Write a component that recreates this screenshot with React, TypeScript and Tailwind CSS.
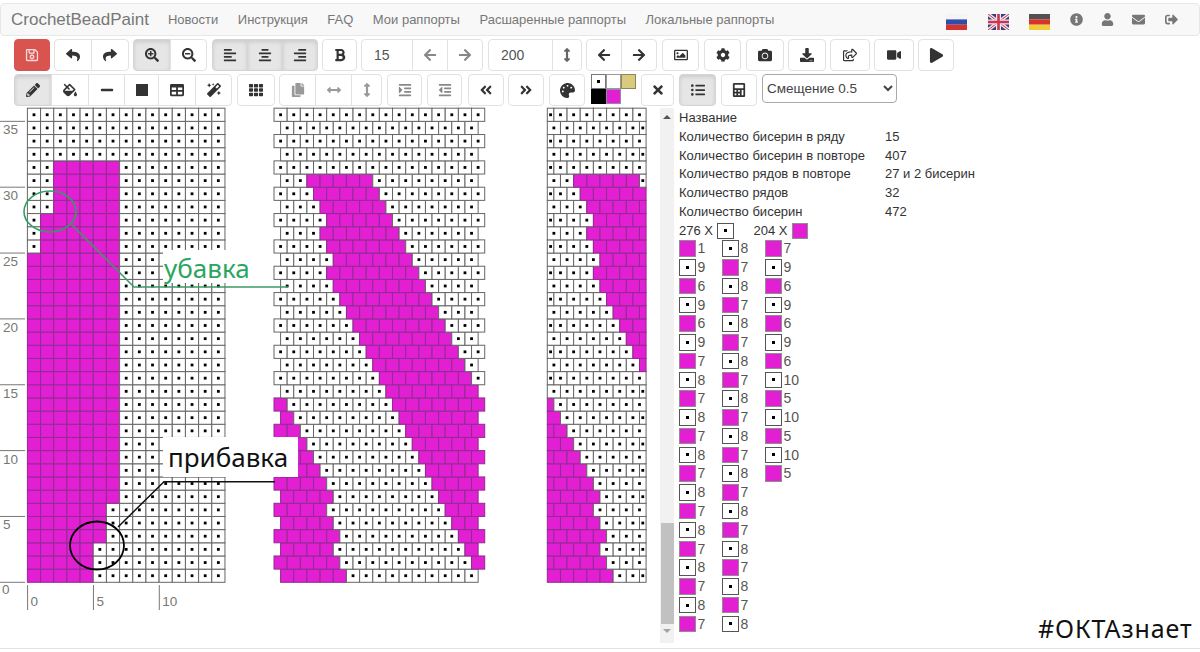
import type { ReactNode } from "react"
import { twMerge } from "tailwind-merge"
import {
  FaAlignCenter, FaAlignLeft, FaAlignRight, FaAngleDoubleLeft, FaAngleDoubleRight,
  FaArrowLeft, FaArrowRight, FaArrowsAltH, FaArrowsAltV, FaBold, FaCalculator, FaCamera,
  FaCog, FaCopy, FaDownload, FaEnvelope, FaFillDrip, FaIndent, FaInfoCircle, FaListUl, FaMagic,
  FaMinus, FaOutdent, FaPalette, FaPencilAlt, FaPlay, FaRegImage, FaRegSave,
  FaRegShareSquare, FaReply, FaSearchMinus, FaSearchPlus, FaShare, FaSignOutAlt,
  FaSquareFull, FaTable, FaTh, FaTimes, FaUser, FaVideo,
} from "react-icons/fa"

const CELL = 13.17
const BOTTOM = 582.3
const MAGENTA = "#e31fd3"

// run lengths as the side list shows them, top to bottom, magenta first
const RUNS = [
  1, 9, 6, 9, 6, 9, 7, 8, 7, 8, 7, 8, 7, 8, 7, 8, 7, 8, 7, 8, 7,
  8, 7, 8, 7, 8, 7, 8, 7, 8, 7, 8, 7, 8, 7, 8, 7, 8, 7, 8, 7, 8,
  7, 9, 6, 9, 6, 9, 6, 10, 5, 10, 5, 10, 5,
]

const buildBeads = () => {
  const beads: boolean[] = []
  for (let i = RUNS.length - 1; i >= 0; i--) {
    for (let n = 0; n < RUNS[i]; n++) beads.push(i % 2 === 0)
  }
  for (const [len, on] of [[5, 1], [10, 0], [5, 1], [10, 0], [5, 1], [10, 0], [5, 1], [10, 0], [5, 1]]) {
    for (let n = 0; n < len; n++) beads.push(on === 1)
  }
  return beads
}

// rows of the brick view: even rows hold 15 beads and start half a cell in, odd rows hold 16
const buildBrickRows = () => {
  const beads = buildBeads()
  const rows: boolean[][] = []
  let pos = 0
  for (let r = 0; r < 36; r++) {
    const len = r % 2 === 0 ? 15 : 16
    const row: boolean[] = []
    for (let c = 0; c < len; c++) row.push(beads[pos + c] ?? false)
    pos += len
    rows.push(row)
  }
  return rows
}

const draftOn = (r: number, c: number) => {
  if (r > 31) return false
  const end = r <= 2 ? 5 : r <= 5 ? 6 : 7
  const start = r <= 24 ? 0 : r <= 27 ? 1 : 2
  return c >= start && c < end
}

function Bead({ x, y, w, on }: { x: number; y: number; w: number; on: boolean }) {
  return (
    <g>
      <rect x={x} y={y} width={w} height={CELL} fill={on ? MAGENTA : "#fff"} stroke={on ? "#8f2c92" : "#666"} strokeWidth={1} />
      {!on && <rect x={x + w / 2 - 1.4} y={y + CELL / 2 - 1.4} width={2.8} height={2.8} fill="#000" />}
    </g>
  )
}

function Canvas() {
  const brick = buildBrickRows()
  const draft: ReactNode[] = []
  const middle: ReactNode[] = []
  const right: ReactNode[] = []

  for (let r = 0; r < 36; r++) {
    const y = BOTTOM - CELL * (r + 1)
    for (let c = 0; c < 15; c++) {
      draft.push(<Bead key={`${r}-${c}`} x={27.4 + c * CELL} y={y} w={CELL} on={draftOn(r, c)} />)
    }
    const even = r % 2 === 0
    brick[r].forEach((on, c) => {
      middle.push(<Bead key={`${r}-${c}`} x={274 + (even ? CELL / 2 : 0) + c * CELL} y={y} w={CELL} on={on} />)
    })
    for (let c = 0; c < 8; c++) {
      const on = brick[r][c]
      if (even) {
        right.push(<Bead key={`${r}-${c}`} x={547.3 + c * CELL} y={y} w={c === 7 ? CELL / 2 : CELL} on={on} />)
      } else if (c === 0) {
        right.push(<Bead key={`${r}-${c}`} x={547.3} y={y} w={CELL / 2} on={on} />)
      } else {
        right.push(<Bead key={`${r}-${c}`} x={547.3 + CELL / 2 + (c - 1) * CELL} y={y} w={CELL} on={on} />)
      }
    }
  }

  const ticks = [35, 30, 25, 20, 15, 10, 5]

  return (
    <div className="relative w-[660px] shrink-0">
      <svg width="660" height="542" viewBox="0 106 660 542" className="block">
        {ticks.map((t) => {
          const y = BOTTOM - t * CELL
          return (
            <g key={t}>
              <line x1="0" x2="25" y1={y} y2={y} stroke="#777" strokeWidth="1" />
              <text x="3" y={y + 13} fontSize="13.5" fill="#777" fontFamily="Liberation Sans">{t}</text>
            </g>
          )
        })}
        <line x1="0" x2="25" y1={BOTTOM} y2={BOTTOM} stroke="#777" strokeWidth="1" />
        <text x="2" y="594" fontSize="13.5" fill="#777" fontFamily="Liberation Sans">0</text>
        {[0, 5, 10].map((t) => {
          const x = 27.6 + t * CELL
          return (
            <g key={t}>
              <line x1={x} x2={x} y1="585" y2="610" stroke="#777" strokeWidth="1" />
              <text x={x + 3} y="606" fontSize="13.5" fill="#777" fontFamily="Liberation Sans">{t}</text>
            </g>
          )
        })}
        <g>{draft}</g>
        <g>{middle}</g>
        <g>{right}</g>
        <ellipse cx="50" cy="211.5" rx="26" ry="20.5" fill="none" stroke="#2f9e62" strokeWidth="1.6" />
        <path d="M72 225L134 287H288" fill="none" stroke="#3a9a66" strokeWidth="1.5" />
        <ellipse cx="97" cy="545.5" rx="27" ry="24" fill="none" stroke="#000" strokeWidth="1.8" />
        <path d="M118 527L164 481.7H275" fill="none" stroke="#111" strokeWidth="1.5" />
      </svg>
      <div className="absolute left-[163px] top-[144px] h-[33px] w-[110px] bg-white pl-[1px] text-[26px] leading-[36px] text-[#2aa660] [font-family:'Noto_Sans',sans-serif]">
        убавка
      </div>
      <div className="absolute left-[163px] top-[331px] h-[40px] w-[135px] bg-white pl-[5px] text-[26px] leading-[40px] text-[#111] [font-family:'Noto_Sans',sans-serif]">
        прибавка
      </div>
    </div>
  )
}

function Btn({ children, className = "" }: { children: ReactNode; className?: string }) {
  return (
    <button
      type="button"
      className={twMerge(
        "flex h-full items-center justify-center border border-[#e2e2e2] bg-white text-[14px] text-[#333]",
        className,
      )}
    >
      {children}
    </button>
  )
}

const ON = "bg-[#e6e6e6] border-[#d4d4d4] shadow-[inset_0_2px_4px_rgba(0,0,0,0.12)]"

function Toolbar() {
  return (
    <>
      <div className="mt-[3px] flex h-[32px] pl-[14px]">
        <Btn className="w-[36px] rounded-[4px] border-[#d9534f] bg-[#d9534f] text-[#f6dcdb]"><FaRegSave /></Btn>
        <div className="ml-[4px] flex">
          <Btn className="w-[38px] rounded-l-[4px]"><FaReply /></Btn>
          <Btn className="-ml-px w-[38px] rounded-r-[4px]"><FaShare /></Btn>
        </div>
        <div className="ml-[4px] flex">
          <Btn className={`w-[38px] rounded-l-[4px] ${ON}`}><FaSearchPlus /></Btn>
          <Btn className="-ml-px w-[37px] rounded-r-[4px]"><FaSearchMinus /></Btn>
        </div>
        <div className="ml-[5px] flex">
          <Btn className={`w-[36px] rounded-l-[4px] ${ON}`}><FaAlignLeft /></Btn>
          <Btn className={`-ml-px w-[36px] ${ON}`}><FaAlignCenter /></Btn>
          <Btn className={`-ml-px w-[36px] rounded-r-[4px] ${ON}`}><FaAlignRight /></Btn>
        </div>
        <Btn className="ml-[4px] w-[35px] rounded-[4px]"><FaBold /></Btn>
        <div className="ml-[4px] flex">
          <div className="flex h-full w-[52px] items-center rounded-l-[4px] border border-[#e2e2e2] pl-[12px] text-[14px] text-[#555]">15</div>
          <Btn className="-ml-px w-[36px] text-[#888]"><FaArrowLeft /></Btn>
          <Btn className="-ml-px w-[36px] rounded-r-[4px] text-[#888]"><FaArrowRight /></Btn>
        </div>
        <div className="ml-[5px] flex">
          <div className="flex h-full w-[65px] items-center rounded-l-[4px] border border-[#e2e2e2] pl-[12px] text-[14px] text-[#555]">200</div>
          <Btn className="-ml-px w-[30px] rounded-r-[4px] text-[#666]"><FaArrowsAltV /></Btn>
        </div>
        <div className="ml-[4px] flex">
          <Btn className="w-[36px] rounded-l-[4px]"><FaArrowLeft /></Btn>
          <Btn className="-ml-px w-[36px] rounded-r-[4px]"><FaArrowRight /></Btn>
        </div>
        <Btn className="ml-[5px] w-[37px] rounded-[4px]"><FaRegImage /></Btn>
        <Btn className="ml-[5px] w-[37px] rounded-[4px]"><FaCog /></Btn>
        <Btn className="ml-[5px] w-[38px] rounded-[4px]"><FaCamera /></Btn>
        <Btn className="ml-[4px] w-[38px] rounded-[4px]"><FaDownload /></Btn>
        <Btn className="ml-[4px] w-[40px] rounded-[4px]"><FaRegShareSquare /></Btn>
        <Btn className="ml-[4px] w-[40px] rounded-[4px]"><FaVideo /></Btn>
        <Btn className="ml-[4px] w-[36px] rounded-[4px] text-[15px]"><FaPlay /></Btn>
      </div>

      <div className="mt-[3px] flex h-[32px] pl-[14px]">
        <div className="flex">
          <Btn className={`w-[38px] rounded-l-[4px] ${ON}`}><FaPencilAlt /></Btn>
          <Btn className="-ml-px w-[38px]"><FaFillDrip /></Btn>
          <Btn className="-ml-px w-[37px]"><FaMinus /></Btn>
          <Btn className="-ml-px w-[35px]"><FaSquareFull className="text-[12px]" /></Btn>
          <Btn className="-ml-px w-[38px]"><FaTable /></Btn>
          <Btn className="-ml-px w-[37px] rounded-r-[4px]"><FaMagic /></Btn>
        </div>
        <Btn className="ml-[5px] w-[38px] rounded-[4px]"><FaTh /></Btn>
        <div className="ml-[4px] flex">
          <Btn className="w-[37px] rounded-l-[4px] text-[#999]"><FaCopy /></Btn>
          <Btn className="-ml-px w-[37px] text-[#999]"><FaArrowsAltH /></Btn>
          <Btn className="-ml-px w-[31px] rounded-r-[4px] text-[#999]"><FaArrowsAltV /></Btn>
        </div>
        <Btn className="ml-[5px] w-[35px] rounded-[4px] text-[#888]"><FaIndent /></Btn>
        <Btn className="ml-[5px] w-[35px] rounded-[4px] text-[#888]"><FaOutdent /></Btn>
        <Btn className="ml-[6px] w-[36px] rounded-[4px]"><FaAngleDoubleLeft /></Btn>
        <Btn className="ml-[4px] w-[36px] rounded-[4px]"><FaAngleDoubleRight /></Btn>
        <Btn className="ml-[5px] w-[36px] rounded-[4px] text-[15px]"><FaPalette /></Btn>
        <div className="ml-[6px] grid h-[30px] w-[45px] grid-cols-3 grid-rows-2">
          <div className="flex items-center justify-center border border-[#777] bg-white"><div className="h-[3px] w-[3px] bg-black" /></div>
          <div className="border border-[#999] bg-white" />
          <div className="border border-[#8d8656] bg-[#d8cb7e]" />
          <div className="bg-black" />
          <div className="border border-[#9a86a6] bg-[#e31fd3]" />
        </div>
        <Btn className="ml-[5px] w-[33px] rounded-[4px]"><FaTimes /></Btn>
        <Btn className={`ml-[5px] w-[37px] rounded-[4px] ${ON}`}><FaListUl /></Btn>
        <Btn className="ml-[5px] w-[36px] rounded-[4px]"><FaCalculator /></Btn>
        <select
          defaultValue="0.5"
          className="ml-[5px] h-[29px] w-[135px] rounded-[4px] border border-[#a9a9a9] bg-white text-[13.5px] text-[#444]"
        >
          <option value="0.5">Смещение 0.5</option>
        </select>
      </div>
    </>
  )
}

function Nav() {
  return (
    <div className="mt-[3px] flex h-[33px] items-center rounded-[4px] border border-[#e7e7e7] bg-[#f8f8f8] pl-[10px] text-[13px] text-[#777]">
      <span className="text-[17px]">CrochetBeadPaint</span>
      <div className="ml-[19px] flex gap-[19.5px]">
        <span>Новости</span>
        <span>Инструкция</span>
        <span>FAQ</span>
        <span>Мои раппорты</span>
        <span>Расшаренные раппорты</span>
        <span>Локальные раппорты</span>
      </div>
      <div className="ml-[172px] flex items-center">
        <svg width="21" height="16" viewBox="0 0 21 16" className="mt-[5px]">
          <rect width="21" height="5.4" fill="#f4f4f6" />
          <rect y="5.4" width="21" height="5.3" fill="#2f4da8" />
          <rect y="10.7" width="21" height="5.3" fill="#d5322f" />
        </svg>
        <svg width="21" height="16" viewBox="0 0 21 16" className="ml-[21px] mt-[5px]">
          <rect width="21" height="16" fill="#3d3f78" />
          <path d="M0 0L21 16M21 0L0 16" stroke="#f0e6ee" strokeWidth="3.4" />
          <path d="M0 0L21 16M21 0L0 16" stroke="#c9354f" strokeWidth="1" />
          <path d="M10.5 0V16M0 8H21" stroke="#f0e6ee" strokeWidth="5" />
          <path d="M10.5 0V16M0 8H21" stroke="#c9354f" strokeWidth="2.6" />
        </svg>
        <svg width="21" height="16" viewBox="0 0 21 16" className="ml-[20px] mt-[5px]">
          <rect width="21" height="5.4" fill="#55504f" />
          <rect y="5.4" width="21" height="5.3" fill="#d7322c" />
          <rect y="10.7" width="21" height="5.3" fill="#f0cc3a" />
        </svg>
        <FaInfoCircle className="ml-[20px] text-[13px]" />
        <FaUser className="ml-[18px] text-[13px]" />
        <FaEnvelope className="ml-[18px] text-[13px]" />
        <FaSignOutAlt className="ml-[20px] text-[13px]" />
      </div>
    </div>
  )
}

function Scrollbar() {
  return (
    <div className="mt-[2px] flex h-[535px] w-[14px] shrink-0 flex-col items-center bg-[#f1f1f1]">
      <div className="mt-[7px] h-0 w-0 border-x-[4px] border-b-[4px] border-x-transparent border-b-[#555]" />
      <div className="mt-[404px] h-[101px] w-[13px] bg-[#c1c1c1]" />
      <div className="mt-[5px] h-0 w-0 border-x-[4px] border-t-[4px] border-x-transparent border-t-[#a3a3a3]" />
    </div>
  )
}

function WhiteCell() {
  return (
    <div className="flex h-[16.5px] w-[16.5px] shrink-0 items-center justify-center border border-[#555] bg-white">
      <div className="h-[3px] w-[3px] bg-black" />
    </div>
  )
}

function PinkCell() {
  return <div className="h-[16.5px] w-[16.5px] shrink-0 border border-[#8f8f8f] bg-[#e31fd3]" />
}

function RunColumn({ runs, pinkFirst }: { runs: number[]; pinkFirst: boolean }) {
  return (
    <div className="flex w-[43px] flex-col">
      {runs.map((n, i) => (
        <div key={i} className="flex h-[18.77px] items-start gap-[2px] text-[14px] leading-[17px]">
          {i % 2 === 0 === pinkFirst ? <PinkCell /> : <WhiteCell />}
          <span>{n}</span>
        </div>
      ))}
    </div>
  )
}

function InfoPanel() {
  const stats = [
    ["Количество бисерин в ряду", "15"],
    ["Количество бисерин в повторе", "407"],
    ["Количество рядов в повторе", "27 и 2 бисерин"],
    ["Количество рядов", "32"],
    ["Количество бисерин", "472"],
  ]
  return (
    <div className="ml-[5px] mt-[3px] text-[13px] leading-[18.75px] text-[#333]">
      <div>Название</div>
      {stats.map(([label, value]) => (
        <div key={label} className="flex">
          <span className="w-[206px]">{label}</span>
          <span>{value}</span>
        </div>
      ))}
      <div className="flex h-[18.75px] items-center">
        <span className="w-[38px]">276 X</span>
        <WhiteCell />
        <span className="ml-[20px] w-[38px]">204 X</span>
        <PinkCell />
      </div>
      <div className="flex text-[#555]">
        <RunColumn runs={RUNS.slice(0, 21)} pinkFirst />
        <RunColumn runs={RUNS.slice(21, 42)} pinkFirst={false} />
        <RunColumn runs={RUNS.slice(42)} pinkFirst />
      </div>
    </div>
  )
}

export default function App() {
  return (
    <div className="relative h-[652px] w-[1200px] overflow-hidden bg-white [font-family:'Liberation_Sans',sans-serif]">
      <Nav />
      <Toolbar />
      <div className="flex h-[542px]">
        <Canvas />
        <Scrollbar />
        <InfoPanel />
      </div>
      <div className="border-t border-[#e2e2e2]" />
      <div className="absolute left-[1038px] top-[612px] text-[25px] leading-[32px] tracking-[0.9px] text-[#111] [font-family:'Noto_Sans',sans-serif]">
        #ОКТАзнает
      </div>
    </div>
  )
}
